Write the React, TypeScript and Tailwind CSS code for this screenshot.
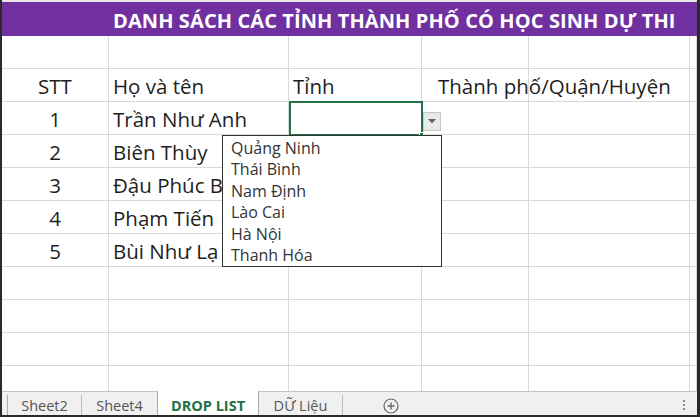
import React from "react";

const cols = [107, 180, 133, 107, 161, 7];

const rows: (string | null)[][] = [
  [null, null, null, null, null, null],
  ["STT", "Họ và tên", "Tỉnh", "Thành phố/Quận/Huyện", null, null],
  ["1", "Trần Như Anh", null, null, null, null],
  ["2", "Biên Thùy", null, null, null, null],
  ["3", "Đậu Phúc B", null, null, null, null],
  ["4", "Phạm Tiến", null, null, null, null],
  ["5", "Bùi Như Lạ", null, null, null, null],
  [null, null, null, null, null, null],
  [null, null, null, null, null, null],
  [null, null, null, null, null, null],
];

const items = ["Quảng Ninh", "Thái Bình", "Nam Định", "Lào Cai", "Hà Nội", "Thanh Hóa"];

function Cell({ w, text, idx, h }: { w: number; text: string | null; idx: number; h: number }) {
  const center = idx === 0;
  const pad = idx === 3 ? "pl-[16px]" : "pl-[4px]";
  return (
    <div
      className={`relative shrink-0 border-r border-b border-[#d9d9d9] flex items-end pb-[2px] overflow-visible whitespace-nowrap ${
        center ? "justify-center" : pad
      }`}
      style={{ width: w, height: h }}
    >
      {text && <span className="text-[20.5px] leading-[26px] text-[#1e1e1e]">{text}</span>}
    </div>
  );
}

export default function App() {
  return (
    <div
      className="relative w-[700px] h-[417px] overflow-hidden bg-white border-l-2 border-r-[3px] border-b-2 border-[#2a2a2a] flex flex-col"
      style={{ fontFamily: '"Open Sans", "Noto Sans", sans-serif' }}
    >
      <div className="h-[2px] bg-[#e6e6e6] shrink-0" />
      <div className="h-[34px] shrink-0 bg-[#7030a0] flex items-center pl-[111px] pt-[3px]">
        <span className="text-white font-bold text-[20px] tracking-[0.1px] whitespace-nowrap">
          DANH SÁCH CÁC TỈNH THÀNH PHỐ CÓ HỌC SINH DỰ THI
        </span>
      </div>
      <div className="flex flex-col shrink-0">
        {rows.map((r, ri) => (
          <div key={ri} className="flex">
            {cols.map((w, ci) => (
              <Cell key={ci} w={w} text={r[ci]} idx={ci} h={33} />
            ))}
          </div>
        ))}
        <div className="flex">
          {cols.map((w, ci) => (
            <div key={ci} className="shrink-0 border-r border-[#d9d9d9] h-[25px]" style={{ width: w }} />
          ))}
        </div>
      </div>
      <div className="flex-1 bg-[#f0f0f0] border-t border-[#c4c4c4] flex items-stretch relative text-[14.5px] text-[#555]">
        <div className="w-[6px] border-r border-[#aaa] my-[3px]" />
        <div className="w-[74px] flex items-center justify-center border-r border-[#bbb] my-[3px]">Sheet2</div>
        <div className="w-[75px] flex items-center justify-center">Sheet4</div>
        <div className="w-[102px] -mt-px flex items-center justify-center bg-white border-x border-[#aaa] text-[#217346] font-bold">
          DROP LIST
        </div>
        <div className="w-[84px] flex items-center justify-center border-r border-[#bbb] my-[3px]">DỮ Liệu</div>
        <div className="w-[96px] flex items-center justify-center">
          <svg width="16" height="16" viewBox="0 0 16 16">
            <circle cx="8" cy="8" r="7" fill="none" stroke="#666" strokeWidth="1.2" />
            <path d="M8 4.5v7M4.5 8h7" stroke="#666" strokeWidth="1.4" />
          </svg>
        </div>
        <div className="absolute right-[12px] top-[8px] flex flex-col gap-[2px]">
          <div className="w-[2px] h-[2px] bg-[#888]" />
          <div className="w-[2px] h-[2px] bg-[#888]" />
          <div className="w-[2px] h-[2px] bg-[#888]" />
        </div>
      </div>

      {/* selected cell */}
      <div className="absolute left-[287px] top-[101px] w-[134px] h-[35px] border-2 border-[#217346]" />
      <div className="absolute left-[417px] top-[132px] w-[5px] h-[5px] bg-[#217346] border border-white" />
      {/* dropdown arrow button */}
      <div className="absolute left-[421px] top-[112px] w-[18px] h-[19px] bg-[#e9e9e9] border border-[#c8c8c8] flex items-center justify-center">
        <svg width="8" height="5" viewBox="0 0 8 5">
          <path d="M0 0h8L4 4.5z" fill="#666" />
        </svg>
      </div>
      {/* dropdown list */}
      <div className="absolute left-[220px] top-[135px] w-[220px] h-[132px] bg-white border border-[#333] pt-[2px] pl-[8px]">
        {items.map((it) => (
          <div key={it} className="h-[21.4px] text-[16px] leading-[21px] text-[#333] whitespace-nowrap">
            {it}
          </div>
        ))}
      </div>
    </div>
  );
}
